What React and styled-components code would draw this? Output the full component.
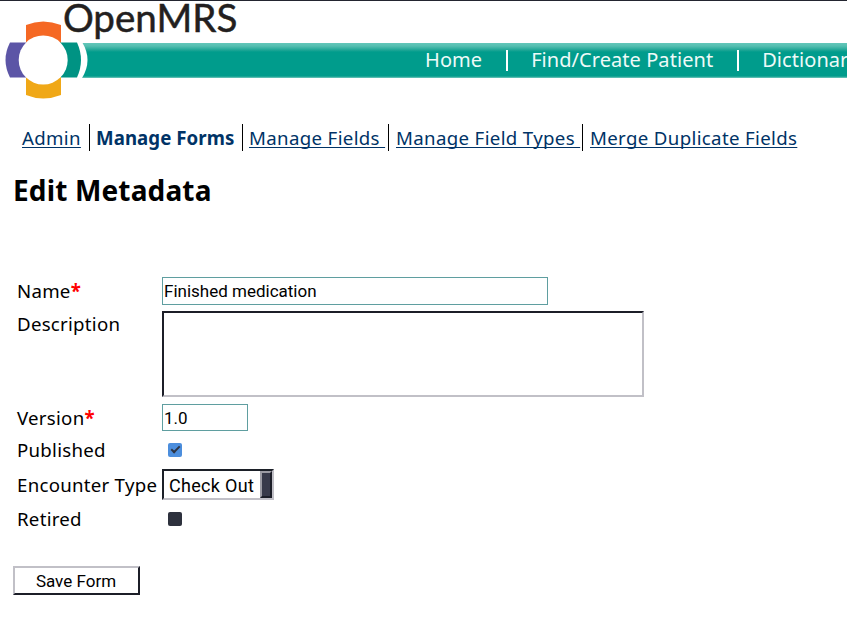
import React from "react";
import styled, { createGlobalStyle } from "styled-components";

const GlobalStyle = createGlobalStyle`
  *, *::before, *::after { box-sizing: border-box; }
  html, body { margin: 0; overflow: hidden; background: #fff; }
  body { font: 18.67px/26px "Noto Sans", sans-serif; color: #000; }
`;

const Page = styled.div`
  width: 847px;
  height: 623px;
  overflow: hidden;
  border-top: 1px solid #232530;
  background: #fff;
`;

const Banner = styled.header`
  display: grid;
  height: 101px;
  > * { grid-area: 1 / 1; }
`;

const Logo = styled.svg`
  width: 250px;
  height: 101px;
  overflow: visible;
  z-index: 1;
`;

const NavBar = styled.nav`
  display: flex;
  align-items: center;
  height: 35px;
  margin: 42px 0 0 82px;
  padding-left: 319px;
  overflow: hidden;
  background: linear-gradient(#63c6b9 0, #55bfb1 3px, #1fa696 7px, #009c8c 9px, #009c8c 33px, #35ad9f 34px, #7accc2 35px);
`;

const NavLink = styled.a`
  flex: none;
  height: 21px;
  padding: 0 24px;
  padding-left: ${(p) => (p.$first ? 24 : 23)}px;
  border-left: ${(p) => (p.$first ? "0" : "2px solid #fff")};
  color: #eefaf8;
  font-size: 20px;
  line-height: 20px;
  letter-spacing: 0.06px;
  white-space: nowrap;
`;

const SubNav = styled.nav`
  display: flex;
  height: 27px;
  margin: 22px 0 0 22px;
`;

const SubItem = styled.div`
  flex: none;
  width: ${(p) => p.$width}px;
  height: 27px;
  padding-left: ${(p) => (p.$first ? 0 : p.$wide ? 7 : 6)}px;
  border-left: ${(p) => (p.$first ? "0" : "1px solid #000")};
  line-height: 27px;
  white-space: pre;
`;

const SubLink = styled.a`
  color: #003366;
  font-weight: ${(p) => (p.$active ? 700 : 400)};
  text-decoration: ${(p) => (p.$active ? "none" : "underline")};
  text-decoration-thickness: 1px;
  text-underline-offset: 2px;
  text-decoration-skip-ink: none;
  letter-spacing: ${(p) => (p.$active ? 0.06 : 0.34)}px;
`;

const Title = styled.h2`
  margin: 20px 0 0 13px;
  font-size: 28px;
  line-height: 38px;
  font-weight: 700;
  letter-spacing: 0.15px;
`;

const Form = styled.form`
  display: block;
  margin: 68px 0 0 13px;
`;

const Fields = styled.div`
  display: grid;
  grid-template-columns: 145px 1fr;
  grid-template-rows: 34px 93px 34px 30px 36px 33px;
  padding-left: 4px;
`;

const Label = styled.label`
  margin-top: ${(p) => p.$top}px;
  line-height: 26px;
  white-space: nowrap;
  letter-spacing: 0.26px;
`;

const Required = styled.span`
  color: #f00;
  font-weight: 700;
`;

const TextField = styled.input`
  display: block;
  width: ${(p) => p.$width}px;
  height: ${(p) => p.$height}px;
  padding: 1px;
  border: 1px solid #5f9ea0;
  border-radius: 0;
  outline: none;
  background: #fff;
  color: #000;
  font: 17px Roboto, sans-serif;
`;

const TextArea = styled.textarea`
  display: block;
  width: 482px;
  height: 86px;
  resize: none;
  border: 2px solid;
  border-color: #1c1e28 #c1c0c7 #c1c0c7 #1c1e28;
  border-radius: 0;
  outline: none;
`;

const Check = styled.input`
  appearance: none;
  display: grid;
  place-items: center;
  width: 14px;
  height: 14px;
  margin: ${(p) => p.$top}px 0 0 6px;
  border-radius: 2px;
  background: #2d313d;
  &:checked { background: #4c8edd; }
  &:checked::before {
    content: "";
    width: 9px;
    height: 5px;
    margin-top: -3px;
    border: solid #2d3444;
    border-width: 0 0 2px 2px;
    transform: rotate(-45deg);
  }
`;

const Select = styled.button`
  display: flex;
  justify-content: space-between;
  width: 112px;
  height: 31px;
  margin-top: 1px;
  padding: 0 0 0 5px;
  border: 2px solid;
  border-color: #1c2028 #c1c0c7 #c1c0c7 #1c2028;
  background: #fff;
  color: #000;
  font: 18px/29px Roboto, sans-serif;
  letter-spacing: 0.3px;
  white-space: nowrap;
`;

const SelectHandle = styled.span`
  width: 12px;
  height: 27px;
  border: 2px solid;
  border-color: #9c9ba3 #1c1e28 #1c1e28 #9c9ba3;
  background: #383a4a;
`;

const SaveButton = styled.button`
  display: block;
  width: 127px;
  height: 29px;
  margin-top: 29px;
  padding: 1px 1px 0 0;
  border: 2px solid;
  border-color: #c1c0c7 #1c1e28 #1c1e28 #c1c0c7;
  background: #fff;
  color: #000;
  font: 17px Roboto, sans-serif;
`;

function OpenMRSLogo() {
  return (
    <Logo viewBox="0 1 250 101" role="img" aria-label="OpenMRS">
      <path d="M76 42H82Q93 60 82 78H76Z" fill="#fff" />
      <path d="M26 25Q43 18 61 25V48H26Z" fill="#f56824" />
      <path d="M10 42.5H29V77.5H10Q1 60 10 42.5Z" fill="#5c55a6" />
      <path d="M58 42.5H77Q85 60 77 77.5H58Z" fill="#009383" />
      <path d="M26 73H61V95Q43 102 26 95Z" fill="#f0a817" />
      <circle cx="43.2" cy="60" r="24.5" fill="#fff" />
      <text x="62.9" y="32" textLength="174.4" lengthAdjust="spacingAndGlyphs" fontFamily="Lato, sans-serif" fontSize="38.5" fill="#231f20" stroke="#231f20" strokeWidth=".5">OpenMRS</text>
    </Logo>
  );
}

export default function App() {
  return (
    <>
      <GlobalStyle />
      <Page>
        <Banner>
          <OpenMRSLogo />
          <NavBar>
            <NavLink $first>Home</NavLink>
            <NavLink>Find/Create Patient</NavLink>
            <NavLink>Dictionary</NavLink>
          </NavBar>
        </Banner>
        <SubNav>
          <SubItem $first $width={67}><SubLink>Admin</SubLink></SubItem>
          <SubItem $width={153}><SubLink $active>Manage Forms</SubLink></SubItem>
          <SubItem $width={146}><SubLink>Manage Fields </SubLink></SubItem>
          <SubItem $wide $width={194}><SubLink>Manage Field Types </SubLink></SubItem>
          <SubItem $wide $width={230}><SubLink>Merge Duplicate Fields</SubLink></SubItem>
        </SubNav>
        <Title>Edit Metadata</Title>
        <Form onSubmit={(e) => e.preventDefault()}>
          <Fields>
            <Label $top={1}>Name<Required>*</Required></Label>
            <TextField $width={386} $height={28} defaultValue="Finished medication" />
            <Label $top={0}>Description</Label>
            <TextArea />
            <Label $top={1}>Version<Required>*</Required></Label>
            <TextField $width={86} $height={27} defaultValue="1.0" />
            <Label $top={-1}>Published</Label>
            <Check type="checkbox" $top={5} defaultChecked />
            <Label $top={4}>Encounter Type</Label>
            <Select type="button">Check Out<SelectHandle /></Select>
            <Label $top={2}>Retired</Label>
            <Check type="checkbox" $top={8} />
          </Fields>
          <SaveButton type="submit">Save Form</SaveButton>
        </Form>
      </Page>
    </>
  );
}
